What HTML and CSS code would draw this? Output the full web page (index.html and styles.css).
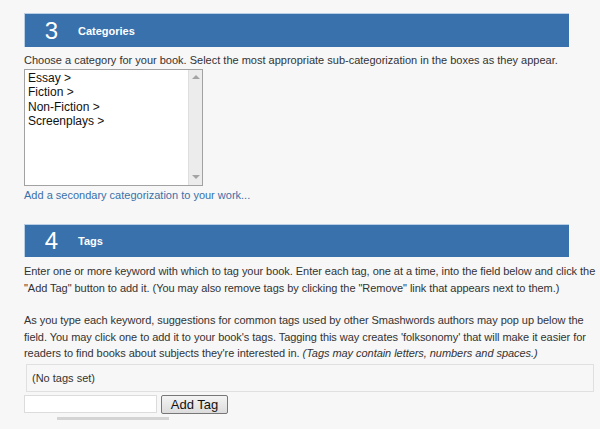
FILE: index.html
```html
<!DOCTYPE html>
<html lang="en">
<head>
    <meta charset="UTF-8">
    <title>Publish - Categories and Tags</title>
    <link rel="stylesheet" href="styles.css">
</head>
<body>
<div class="page">
    <div class="step-header">
        <span class="step-num">3</span>
        <span class="step-title">Categories</span>
    </div>
    <p class="intro">Choose a category for your book. Select the most appropriate sub-categorization in the boxes as they appear.</p>
    <div class="listbox">
        <div class="listbox-options">
            <div class="option">Essay &gt;</div>
            <div class="option">Fiction &gt;</div>
            <div class="option">Non-Fiction &gt;</div>
            <div class="option">Screenplays &gt;</div>
        </div>
        <div class="scrollbar">
            <span class="arrow-up"></span>
            <span class="arrow-down"></span>
        </div>
    </div>
    <a href="#" class="secondary-link">Add a secondary categorization to your work...</a>

    <div class="step-header step-tags">
        <span class="step-num">4</span>
        <span class="step-title">Tags</span>
    </div>
    <p class="help">Enter one or more keyword with which to tag your book. Enter each tag, one at a time, into the field below and click the "Add Tag" button to add it. (You may also remove tags by clicking the "Remove" link that appears next to them.)</p>
    <p class="help help-second">As you type each keyword, suggestions for common tags used by other Smashwords authors may pop up below the field. You may click one to add it to your book's tags. Tagging this way creates 'folksonomy' that will make it easier for readers to find books about subjects they're interested in. <em>(Tags may contain letters, numbers and spaces.)</em></p>
    <div class="tag-list">(No tags set)</div>
    <form class="tag-form" onsubmit="return false">
        <input type="text" class="tag-input">
        <input type="submit" class="tag-button" value="Add Tag">
    </form>
    <div class="suggest-bar"></div>
</div>
</body>
</html>
```

FILE: styles.css
```css
body {
    margin: 0;
    background-color: #f7f7f7;
    font-family: "Liberation Sans", Arial, sans-serif;
    font-size: 11px;
    color: #333;
}

.page {
    padding: 13px 0 0 24px;
}

.step-header {
    display: flex;
    align-items: center;
    box-sizing: border-box;
    width: 545px;
    height: 34px;
    background-color: #3871ac;
    border-top: 1px solid #b9cfe6;
    border-left: 1px solid #b9cfe6;
    color: white;
}

.step-num {
    width: 53px;
    text-align: center;
    font-size: 24px;
    line-height: 1;
}

.step-title {
    font-weight: bold;
    font-size: 11px;
}

.intro {
    margin: 6px 0 2px;
    line-height: 14px;
}

.listbox {
    display: flex;
    width: 177px;
    height: 115px;
    background-color: white;
    border: 1px solid #a2a2a2;
}

.listbox-options {
    flex: 1;
    padding: 1px 0 0 3px;
    font-size: 12px;
    line-height: 14.3px;
    color: #111;
}

.scrollbar {
    position: relative;
    width: 13px;
    background-color: #ececec;
    border-left: 1px solid #dedede;
}

.arrow-up,
.arrow-down {
    position: absolute;
    left: 3px;
    width: 0;
    height: 0;
    border-left: 4px solid transparent;
    border-right: 4px solid transparent;
}

.arrow-up {
    top: 5px;
    border-bottom: 4px solid #a4a4a4;
}

.arrow-down {
    bottom: 6px;
    border-top: 4px solid #a4a4a4;
}

.secondary-link {
    display: block;
    margin-top: 2px;
    line-height: 14px;
    color: #3a70a9;
    text-decoration: none;
}

.step-tags {
    margin-top: 22px;
    height: 33px;
}

.help {
    margin: 6px 0 0;
    line-height: 16.5px;
    letter-spacing: -0.05px;
}

.help-second {
    margin-top: 16px;
}

.tag-list {
    margin: 2px 6px 0 2px;
    height: 26px;
    padding-left: 5px;
    line-height: 26px;
    border: 1px solid #e0e0e0;
}

.tag-form {
    display: flex;
    gap: 4px;
    margin-top: 3px;
}

.tag-input {
    box-sizing: border-box;
    width: 133px;
    height: 18px;
    margin: 0;
    border: 1px solid #dcdcdc;
    background-color: white;
}

.tag-button {
    box-sizing: border-box;
    width: 67px;
    height: 19px;
    margin: 0;
    padding: 0;
    font-family: "Liberation Sans", Arial, sans-serif;
    font-size: 13px;
    color: #111;
    border: 1px solid #777;
    border-radius: 2px;
    background: linear-gradient(#f4f4f4, #dcdcdc);
}

.suggest-bar {
    width: 112px;
    height: 3px;
    margin: 3px 0 0 33px;
    background-color: #d4d4d4;
}
```
